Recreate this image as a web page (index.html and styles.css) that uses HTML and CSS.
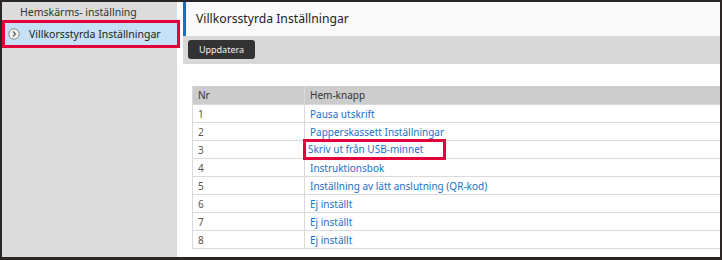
FILE: index.html
```html
<!DOCTYPE html>
<html lang="sv">
<head>
<title>Villkorsstyrda Inställningar</title>
<meta charset="utf-8">
<meta name="viewport" content="width=device-width, initial-scale=1">
<link rel="stylesheet" href="styles.css">
</head>
<body>

<div class="frame">
  <aside class="sidebar">
    <div class="menu_item">Hemskärms- inställning</div>
    <div class="menu_item current">
      <svg class="arrow" width="12" height="12" viewBox="0 0 12 12">
        <circle cx="6" cy="6" r="5.2" fill="#f4f4f4" stroke="#8a8a8a" stroke-width="1"/>
        <path d="M5 3.6 L7.4 6 L5 8.4" fill="none" stroke="#6a6a6a" stroke-width="1.4"/>
      </svg>
      Villkorsstyrda Inställningar
    </div>
  </aside>

  <main class="content">
    <h1 class="page_title">Villkorsstyrda Inställningar</h1>
    <div class="toolbar">
      <button type="button" class="btn">Uppdatera</button>
    </div>

    <table id="list">
      <thead>
        <tr><th class="col_nr">Nr</th><th>Hem-knapp</th></tr>
      </thead>
      <tbody>
        <tr><td>1</td><td><a href="#">Pausa utskrift</a></td></tr>
        <tr><td>2</td><td><a href="#">Papperskassett Inställningar</a></td></tr>
        <tr><td>3</td><td><a href="#" class="marked">Skriv ut från USB-minnet</a></td></tr>
        <tr><td>4</td><td><a href="#">Instruktionsbok</a></td></tr>
        <tr><td>5</td><td><a href="#">Inställning av lätt anslutning (QR-kod)</a></td></tr>
        <tr><td>6</td><td><a href="#">Ej inställt</a></td></tr>
        <tr><td>7</td><td><a href="#">Ej inställt</a></td></tr>
        <tr><td>8</td><td><a href="#">Ej inställt</a></td></tr>
      </tbody>
    </table>
  </main>
</div>

</body>
</html>
```

FILE: styles.css
```css
body {
  margin: 0;
  font-family: "Noto Sans", "Open Sans", sans-serif;
  color: #333;
}
.frame {
  box-sizing: border-box;
  width: 722px;
  height: 260px;
  border-style: solid;
  border-color: #2b2624;
  border-width: 2px 2px 3px 2px;
  display: flex;
  overflow: hidden;
  background: #fff;
}

/* left menu */
.sidebar {
  flex: 0 0 175px;
  background: #dcdcdc;
}
.menu_item {
  font-size: 10.5px;
  height: 21px;
  line-height: 21px;
  padding-left: 18px;
  color: #333;
}
.menu_item.current {
  display: flex;
  align-items: center;
  height: 22px;
  line-height: 22px;
  margin-left: 3px;
  padding-left: 3px;
  gap: 9px;
  background: #c6e0f7;
  color: #222;
  outline: 3px solid #e4003b;
}
.arrow {
  flex: none;
}

/* main area */
.content {
  flex: 1;
  margin-left: 6px;
  min-width: 0;
}
.page_title {
  margin: 0;
  height: 34px;
  line-height: 34px;
  padding-left: 10px;
  border-left: 3px solid #1b6fbd;
  background: #fafafa;
  font-size: 12.2px;
  font-weight: normal;
  color: #222;
}
.toolbar {
  height: 28px;
  box-sizing: border-box;
  padding: 4px 5px;
  background: #d8d8d8;
}
.btn {
  display: block;
  width: 67px;
  height: 19px;
  padding: 0;
  border: none;
  border-radius: 3px;
  background: #333;
  color: #f0f0f0;
  font-family: inherit;
  font-size: 9px;
}

#list {
  margin: 22px 0 0 9px;
  width: 560px;
  border-collapse: collapse;
  font-size: 10px;
  border-left: 1px solid #dadada;
}
#list th,
#list td {
  height: 17px;
  padding: 0 0 0 5px;
  text-align: left;
  font-weight: normal;
  border-bottom: 1px solid #dadada;
  white-space: nowrap;
}
#list th {
  background: #cccccc;
  color: #333;
  height: 18px;
}
#list .col_nr {
  width: 106px;
  border-right: 1px solid #dadada;
}
#list td:first-child {
  color: #5a5550;
  border-right: 1px solid #dadada;
}
#list a {
  color: #1d6fc7;
  text-decoration: none;
}
#list a.marked {
  display: inline-block;
  margin-left: -4px;
  padding: 0 20px 0 2px;
  line-height: 15px;
  outline: 3px solid #e4003b;
  outline-offset: 0;
}
```
